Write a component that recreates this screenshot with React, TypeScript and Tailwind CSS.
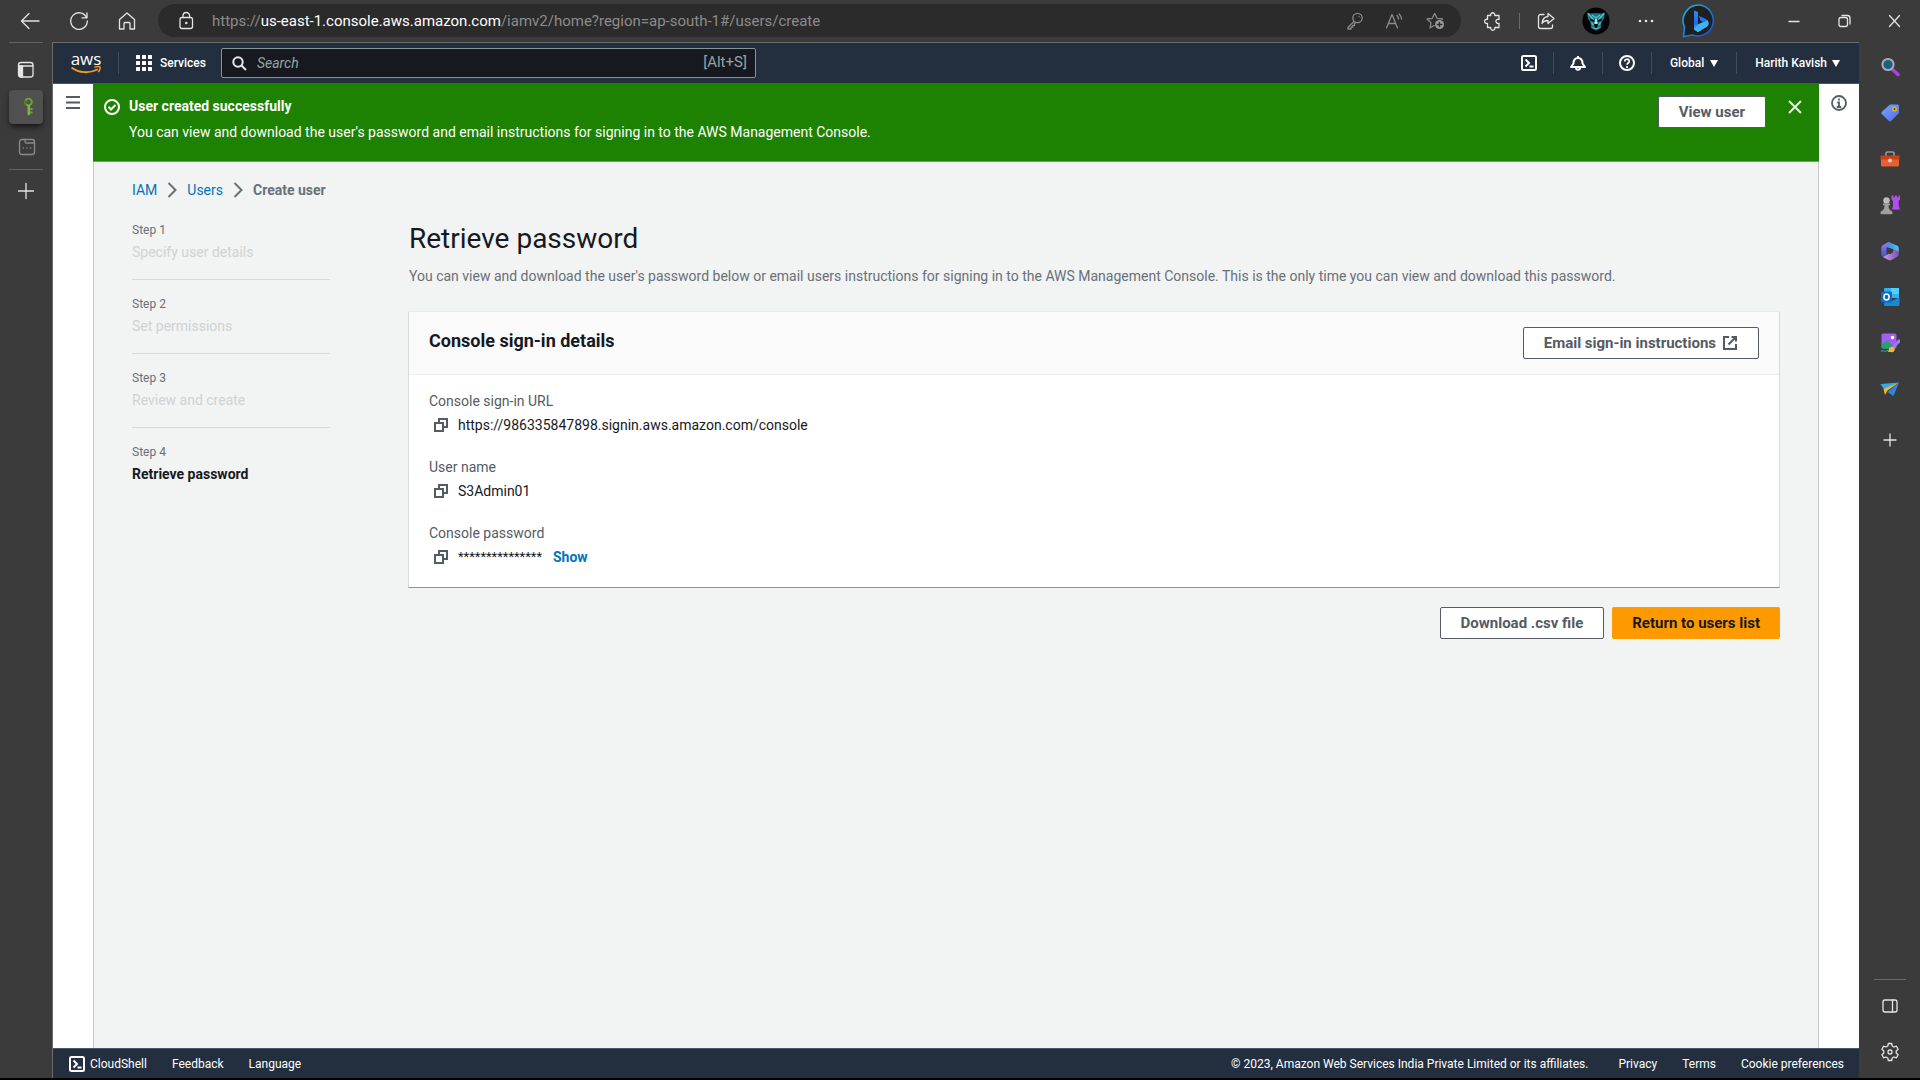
import React, { ReactNode } from "react";

type SvgProps = { className?: string; children: ReactNode; viewBox?: string };

function Line({ className = "size-5", children, viewBox = "0 0 20 20" }: SvgProps) {
  return (
    <svg
      className={className}
      viewBox={viewBox}
      fill="none"
      stroke="currentColor"
      strokeWidth="1.3"
      strokeLinecap="round"
      strokeLinejoin="round"
      aria-hidden="true"
    >
      {children}
    </svg>
  );
}

function Polaris({ className = "size-4", children, viewBox = "0 0 16 16" }: SvgProps) {
  return (
    <svg className={className} viewBox={viewBox} fill="none" stroke="currentColor" strokeWidth="2" aria-hidden="true">
      {children}
    </svg>
  );
}

function IconButton({ label, className = "", children }: { label: string; className?: string; children: ReactNode }) {
  return (
    <button type="button" aria-label={label} className={`flex shrink-0 items-center justify-center ${className}`}>
      {children}
    </button>
  );
}

/* ---------- Browser toolbar ---------- */

function Avatar() {
  return (
    <svg className="size-7" viewBox="0 0 28 28" aria-hidden="true">
      <circle cx="14" cy="14" r="13.6" fill="#020406" />
      <path d="M5 5.500 9 6.500 14 6 19 6.500 23 5.500 22 12 19.500 15.500 19 21 14 23.500 9 21 8.500 15.500 6 12Z" fill="#1d7480" />
      <path d="M6 6.500 11.500 12.500M22 6.500 16.500 12.500M10 8 14 11 18 8M9.500 15.500 11.500 18.500M18.500 15.500 16.500 18.500" stroke="#4fc9d4" strokeWidth="1.300" fill="none" />
      <path d="M8 12.500 12 14M20 12.500 16 14" stroke="#020406" strokeWidth="1.500" />
      <path d="M12 17h4l-1 3.500h-2Z" fill="#020406" />
      <path d="M14 12v3.500M12.500 16h3" stroke="#d6fbff" strokeWidth="1.600" />
      <path d="M10.500 20.500 14 22l3.500-1.500" stroke="#4fc9d4" fill="none" />
    </svg>
  );
}

function BingLogo() {
  return (
    <svg className="size-[34px]" viewBox="0 0 34 34" aria-hidden="true">
      <defs>
        <linearGradient id="bingRing" x1="0" y1="0" x2="1" y2="1">
          <stop offset="0" stopColor="#22b5e6" />
          <stop offset="1" stopColor="#1a45c8" />
        </linearGradient>
        <linearGradient id="bingB" x1="0" y1="0" x2="0" y2="1">
          <stop offset="0" stopColor="#2f8cf2" />
          <stop offset="0.600" stopColor="#1d6af0" />
          <stop offset="1" stopColor="#49c8f5" />
        </linearGradient>
      </defs>
      <path d="M17 1A15.500 15.500 0 1 1 10.500 31L1.500 32.500 2.500 23A15.500 15.500 0 0 1 17 1Z" fill="#1f1f20" stroke="url(#bingRing)" strokeWidth="1.600" />
      <path d="M12 6.500 16 8v12.500l5-2.700-2.600-1.300L17 12l7 3a4.500 4.500 0 0 1 1 7.500L16 28l-4-2.500Z" fill="url(#bingB)" />
      <path d="M16 20.500 25.500 16.500a4.500 4.500 0 0 1-.500 6L16 28l-4-2.500Z" fill="#3fb4f5" />
    </svg>
  );
}

function BrowserBar() {
  return (
    <header className="flex h-[42px] shrink-0 items-start bg-[#3b3b3b] pt-1 text-[#e4e4e4]">
      <div className="flex h-[33px] w-[158px] shrink-0 items-center pl-5">
        <IconButton label="Back" className="w-5">
          <Line>
            <path d="M19 10H2M9 2.500 1.500 10 9 17.500" />
          </Line>
        </IconButton>
        <IconButton label="Refresh" className="ml-[29px] w-5">
          <Line>
            <path d="M17.500 6.500A8.300 8.300 0 1 0 18.300 10M18 1.800v5h-5" />
          </Line>
        </IconButton>
        <IconButton label="Home" className="ml-7 w-5">
          <Line>
            <path d="M2.500 8.500 10 2l7.500 6.500V18H13v-5.500a1 1 0 0 0-1-1H8a1 1 0 0 0-1 1V18H2.500Z" />
          </Line>
        </IconButton>
      </div>

      <div className="flex h-[33px] min-w-0 flex-1 items-center rounded-full bg-[#2b2b2b] pr-4 pl-[18px] text-[#8b8b8b]">
        <IconButton label="Site information" className="w-5 text-[#e4e4e4]">
          <Line>
            <rect x="4" y="6.500" width="12.500" height="11" rx="2" />
            <path d="M7 6.500V4.800a3.300 3.300 0 0 1 6.600 0v1.700" />
            <circle cx="10.300" cy="12" r="0.600" fill="currentColor" />
          </Line>
        </IconButton>
        <button type="button" className="ml-4 min-w-0 flex-1 truncate text-left text-[15px] leading-6">
          https://<span className="text-white">us-east-1.console.aws.amazon.com</span>/iamv2/home?region=ap-south-1#/users/create
        </button>
        <div className="flex items-center gap-5">
          <IconButton label="Password manager" className="w-5">
            <Line>
              <circle cx="12.500" cy="7" r="4.700" />
              <path d="M9 10.500 3 16.500V18h3v-1.800h1.800v-1.800h1.700v-1.600l1-1M14 5.500v.100" />
            </Line>
          </IconButton>
          <IconButton label="Read aloud" className="w-5">
            <Line>
              <path d="M1.500 17 7 3.500 12.500 17M3.500 12.500h7M12 4.500a5 5 0 0 1 1.500 3.500M14.200 3a8 8 0 0 1 2.300 5" />
            </Line>
          </IconButton>
          <IconButton label="Add to favorites" className="w-5">
            <Line>
              <path d="M9 14.500 5 17l1-5.300L2 8l5.300-.700L9.700 2.500l2.400 4.800L17.500 8" />
              <circle cx="14.500" cy="13.500" r="4.500" fill="#9a9a9a" stroke="none" />
              <path d="M14.500 11.300v4.400M12.300 13.500h4.400" stroke="#2b2b2b" />
            </Line>
          </IconButton>
        </div>
      </div>

      <div className="flex h-[33px] shrink-0 items-center pl-[22px]">
        <IconButton label="Extensions" className="w-5">
          <Line>
            <path d="M4.500 4.500h3.200a2.100 2.100 0 1 1 4 0H16v4a2.100 2.100 0 1 0 0 3.700v4.300h-4.200a2.100 2.100 0 1 1-4 0H4.500v-4.200a2.100 2.100 0 1 1 0-3.900Z" />
          </Line>
        </IconButton>
        <span className="mx-4 h-4 w-px bg-[#6a6a6a]" />
        <IconButton label="Share" className="w-5">
          <Line>
            <path d="M8 3.500H4.500a2 2 0 0 0-2 2v10a2 2 0 0 0 2 2h10a2 2 0 0 0 2-2V14" />
            <path d="M12 2.500 18 7.500l-6 5V9.500c-3 0-5 1.200-6 3C6.300 8.500 8.500 5.800 12 5.500Z" />
          </Line>
        </IconButton>
        <IconButton label="Profile" className="ml-[26px] w-7">
          <Avatar />
        </IconButton>
        <IconButton label="Settings and more" className="ml-[26px] w-5">
          <svg className="size-5" viewBox="0 0 20 20" fill="currentColor" aria-hidden="true">
            <circle cx="4" cy="10" r="1.300" />
            <circle cx="10" cy="10" r="1.300" />
            <circle cx="16" cy="10" r="1.300" />
          </svg>
        </IconButton>
        <IconButton label="Bing" className="ml-[26px] w-[34px]">
          <BingLogo />
        </IconButton>
        <div className="ml-[68px] flex items-center gap-[30px] pr-4">
          <IconButton label="Minimize" className="w-5">
            <Line>
              <path d="M5 10.500h10" />
            </Line>
          </IconButton>
          <IconButton label="Restore" className="w-5">
            <Line>
              <rect x="5" y="6.500" width="8.500" height="9" rx="2" />
              <path d="M8 4.500h5.500a2.500 2.500 0 0 1 2.500 2.500v6" />
            </Line>
          </IconButton>
          <IconButton label="Close" className="w-5">
            <Line>
              <path d="M5.500 4.500l10 11M15.500 4.500l-10 11" />
            </Line>
          </IconButton>
        </div>
      </div>
    </header>
  );
}

/* ---------- Browser side rails ---------- */

function TabRail() {
  return (
    <nav aria-label="Tabs" className="flex w-[52px] shrink-0 flex-col items-center bg-[#3b3b3b] text-[#e4e4e4]">
      <span className="h-px w-[34px] bg-[#636363]" />
      <IconButton label="Tab actions" className="mt-4 size-5">
        <Line>
          <rect x="2.500" y="3.500" width="14.500" height="14.500" rx="2.500" />
          <path d="M2.500 7h14.500" />
          <path d="M3 7h3.500v11H5a2 2 0 0 1-2-2Z" fill="currentColor" />
        </Line>
      </IconButton>
      <IconButton label="IAM tab" className="mt-[11px] size-[34px] rounded bg-[#505050] shadow-md shadow-black/50">
        <svg className="size-5" viewBox="0 0 20 20" aria-hidden="true">
          <circle cx="12.500" cy="5" r="3.300" fill="none" stroke="#6f9c37" strokeWidth="2" />
          <path d="M8 3.500 10 5 8.500 8" fill="none" stroke="#4f7426" strokeWidth="1.500" />
          <path d="M11.500 8H14v9.500l-1.300 1-1.200-1Z" fill="#7eb23e" />
          <path d="M14 11h2.500v2H14zM14 14.500h2.500v2H14z" fill="#6f9c37" />
        </svg>
      </IconButton>
      <IconButton label="Sleeping tab" className="mt-[13px] size-5 text-[#8a8a8a]">
        <Line>
          <rect x="3.500" y="2.500" width="15" height="15" rx="2.500" />
          <path d="M9 2.500v2A1.500 1.500 0 0 0 10.500 6h8M7.300 11h.200M10.900 11h.200M14.500 11h.200" />
        </Line>
      </IconButton>
      <span className="mt-3 h-px w-[34px] bg-[#636363]" />
      <IconButton label="New tab" className="mt-[11px] size-5">
        <Line>
          <path d="M2.500 10h15M10 2.500v15" />
        </Line>
      </IconButton>
    </nav>
  );
}

const apps: { name: string; art: ReactNode }[] = [
  {
    name: "Search",
    art: (
      <>
        <path d="m12.500 12.500 5.500 5" stroke="#b43be8" strokeWidth="3.500" strokeLinecap="round" />
        <circle cx="8" cy="7.500" r="5.600" fill="#1b5f83" stroke="#a9adb0" strokeWidth="2" />
      </>
    ),
  },
  {
    name: "Shopping",
    art: (
      <>
        <path d="M10 1.500h7.500a1.500 1.500 0 0 1 1.500 1.500v7l-8 8a1.500 1.500 0 0 1-2 0L1.700 11a1.500 1.500 0 0 1 0-2Z" fill="url(#tagFill)" />
        <circle cx="14.500" cy="6" r="1.700" fill="#3a3a3a" stroke="#e8b90c" strokeWidth="1.600" />
      </>
    ),
  },
  {
    name: "Tools",
    art: (
      <>
        <path d="M6 7V4.500A1.500 1.500 0 0 1 7.500 3h5A1.500 1.500 0 0 1 14 4.500V7" fill="none" stroke="#9a9a9a" strokeWidth="1.600" />
        <path d="M1 10h18v6.500a1 1 0 0 1-1 1H2a1 1 0 0 1-1-1Z" fill="#e8602f" />
        <path d="M.500 6.500h19v4H.500Z" fill="#c6401a" />
        <circle cx="10" cy="11.500" r="2" fill="#d2d2d2" />
      </>
    ),
  },
  {
    name: "Games",
    art: (
      <>
        <path d="M11.500.500h2v1.700H15V.500h2v1.700h1.500V.500h1.500v4L18.700 6v5l1.300 3.500h-8L13 11V6l-1.500-1.500Z" fill="#b44cf2" />
        <circle cx="6.500" cy="5.500" r="3.200" fill="#bdbdbd" />
        <path d="M3 8.500h7v1.800H8.500c0 2 .500 3.500 1.500 5 1.700.500 2.500 1.400 2.500 2.700 0 .800-.400 1.200-1.200 1.200H1.700c-.800 0-1.200-.400-1.200-1.200 0-1.300.800-2.200 2.500-2.700 1-1.500 1.500-3 1.500-5H3Z" fill="#a0a0a0" />
      </>
    ),
  },
  {
    name: "Microsoft 365",
    art: (
      <>
        <path d="M9 .800 3 4a3 3 0 0 0-1.700 2.700v6.500A3 3 0 0 0 3 16l3.500-2V6.500L12 3.500Z" fill="url(#m365a)" />
        <path d="M8.500 1 17 4.500a3 3 0 0 1 1.700 2.700v4.300L13 8.500 6.500 6Z" fill="url(#m365b)" />
        <path d="M18.700 10.500v2.700A3 3 0 0 1 17 16l-5.500 3a3 3 0 0 1-3 0L3 16l3.500-2 7-4v-2Z" fill="url(#m365c)" />
        <path d="M10 7 13 8.500v3L10 13.300 7.200 11.700V8.500Z" fill="#3b3b3b" />
      </>
    ),
  },
  {
    name: "Outlook",
    art: (
      <>
        <path d="M5 1h13a1 1 0 0 1 1 1v9H4V2a1 1 0 0 1 1-1Z" fill="#35b2ee" />
        <path d="M11 1h8v6h-8Z" fill="#50d0fa" />
        <path d="M4 10l8 4 7.500-4v8a1 1 0 0 1-1 1H5a1 1 0 0 1-1-1Z" fill="#1689d8" />
        <rect x="1" y="4.500" width="11" height="11" rx="1" fill="#0a6cc4" />
        <ellipse cx="6.500" cy="10" rx="2.600" ry="2.900" fill="none" stroke="#fff" strokeWidth="1.500" />
      </>
    ),
  },
  {
    name: "Image Creator",
    art: (
      <>
        <rect x="1.500" y=".500" width="15" height="15" rx="1.500" fill="#a35df0" />
        <circle cx="12.500" cy="4.500" r="1.700" fill="#fff" />
        <path d="M1.500 12 7 7.500l7 6-1 2H3a1.500 1.500 0 0 1-1.500-1.500Z" fill="#21a36d" />
        <path d="M1 18.500c2-2.500 3 1 5-.500s3 .500 4 0" fill="none" stroke="#1fa26c" strokeWidth="1.300" />
        <path d="m19 8-6.500 7" stroke="#9b7bf5" strokeWidth="3.200" strokeLinecap="round" />
        <path d="M13 14a2.500 2.500 0 0 1-2 5H8c1-1 .500-3 1.500-4.500Z" fill="#f6b62f" />
      </>
    ),
  },
  {
    name: "Drop",
    art: (
      <>
        <path d="M.500 5 19 3.500 4.500 11Z" fill="#37a8ec" />
        <path d="M19 3.500 13.500 17 7.500 13Z" fill="#2e86e0" />
        <path d="M19 3.500 3.500 10 5 16l2.500-4.500Z" fill="#f3bb23" />
      </>
    ),
  },
];

function AppRail() {
  return (
    <nav aria-label="Sidebar" className="flex w-[61px] shrink-0 flex-col items-center bg-[#3b3b3b] pt-[15px] pb-4 text-[#e4e4e4]">
      <svg className="absolute size-0" aria-hidden="true">
        <defs>
          <linearGradient id="tagFill" x1="0" y1="0" x2="1" y2="1">
            <stop offset="0" stopColor="#70aaff" />
            <stop offset="1" stopColor="#5b64ee" />
          </linearGradient>
          <linearGradient id="m365a" x1="0" y1="0" x2="0" y2="1">
            <stop offset="0" stopColor="#9a7ff0" />
            <stop offset="1" stopColor="#4055c0" />
          </linearGradient>
          <linearGradient id="m365b" x1="0" y1="0" x2="1" y2="0">
            <stop offset="0" stopColor="#4c7fe0" />
            <stop offset="1" stopColor="#4fc3f0" />
          </linearGradient>
          <linearGradient id="m365c" x1="0" y1="0" x2="1" y2="0">
            <stop offset="0" stopColor="#d69be8" />
            <stop offset="1" stopColor="#7a52b8" />
          </linearGradient>
        </defs>
      </svg>
      <div className="flex flex-col items-center gap-[26px]">
        {apps.map((app) => (
          <IconButton key={app.name} label={app.name} className="size-5">
            <svg className="size-5" viewBox="0 0 20 20" fill="none" aria-hidden="true">
              {app.art}
            </svg>
          </IconButton>
        ))}
      </div>
      <IconButton label="Customize sidebar" className="mt-[31px] size-5">
        <Line>
          <path d="M4 10h12M10 4v12" />
        </Line>
      </IconButton>
      <span className="mt-auto h-px w-8 bg-[#6a6a6a]" />
      <IconButton label="Hide sidebar" className="mt-4 size-5">
        <Line>
          <rect x="3" y="4" width="14" height="12" rx="2" />
          <path d="M12.500 4v12" />
        </Line>
      </IconButton>
      <IconButton label="Sidebar settings" className="mt-[26px] size-5">
        <Line>
          <path d="M8.300 1.500h3.400l.500 2.500 1.800 1 2.400-.800 1.700 3-1.900 1.700v2.200l1.900 1.700-1.700 3-2.400-.800-1.800 1-.500 2.500H8.300L7.800 16 6 15l-2.400.800-1.700-3 1.900-1.700V8.900L1.900 7.200l1.700-3L6 5l1.800-1Z" />
          <circle cx="10" cy="10" r="2" />
        </Line>
      </IconButton>
    </nav>
  );
}

/* ---------- Console header and footer ---------- */

function TerminalIcon() {
  return (
    <Polaris>
      <rect x="1" y="1" width="14" height="14" rx="1.500" />
      <path d="m4.500 4.500 3.500 3.500-3.500 3.500M8.500 11.500h4" />
    </Polaris>
  );
}

function Caret() {
  return (
    <svg className="h-[7px] w-2" viewBox="0 0 8 7" fill="currentColor" aria-hidden="true">
      <path d="M0 0h8L4 7Z" />
    </svg>
  );
}

function ConsoleHeader() {
  return (
    <header className="flex h-[41px] shrink-0 items-center border-b border-[#4a5866] bg-[#232f3e] text-xs text-white">
      <a href="#home" aria-label="AWS home" className="ml-[17px] flex w-8 flex-col items-center">
        <span className="font-['Open_Sans',sans-serif] text-[17px] leading-[14px] font-medium">aws</span>
        <svg className="h-2 w-8" viewBox="0 0 32 8" fill="none" stroke="#f79a1d" aria-hidden="true">
          <path d="M1.500 1.500C9 7.500 20 7.500 28 3.200" strokeWidth="1.800" />
          <path d="M24.500 1.300c2-.800 5-1 5.500-.300s-.300 3.500-1.700 5" strokeWidth="1.400" />
        </svg>
      </a>
      <span className="ml-4 h-[22px] w-px bg-[#414d5c]" />
      <button type="button" className="ml-[17px] flex items-center gap-2 font-medium">
        <svg className="size-4" viewBox="0 0 16 16" fill="currentColor" aria-hidden="true">
          {[0, 6, 12].map((y) => [0, 6, 12].map((x) => <rect key={`${x}-${y}`} x={x} y={y} width="4" height="4" rx="0.500" />))}
        </svg>
        Services
      </button>
      <div className="ml-[15px] flex h-[30px] w-[535px] items-center rounded-xs border border-[#879596] bg-[#16191f] pr-2 pl-[10px] text-sm text-[#95a5a6]">
        <svg className="size-[15px]" viewBox="0 0 15 15" fill="none" stroke="#e6eaea" strokeWidth="2" aria-hidden="true">
          <circle cx="6" cy="6" r="4.700" />
          <path d="m9.500 9.500 4.500 4.500" />
        </svg>
        <input
          type="search"
          aria-label="Search"
          placeholder="Search"
          className="ml-[10px] min-w-0 flex-1 bg-transparent text-sm italic outline-none placeholder:text-[#95a5a6]"
        />
        <span className="text-[15px]">[Alt+S]</span>
      </div>
      <div className="ml-auto flex items-center pr-[19px]">
        <IconButton label="CloudShell" className="w-4">
          <TerminalIcon />
        </IconButton>
        <span className="mx-4 h-[22px] w-px bg-[#414d5c]" />
        <IconButton label="Notifications" className="w-4">
          <Polaris>
            <path d="M8 1v2M3.500 8.500C3.500 5 5.500 3 8 3s4.500 2 4.500 5.500L15 12H1Z" strokeLinejoin="round" />
            <path d="M6 12.500c0 3 4 3 4 0" />
          </Polaris>
        </IconButton>
        <span className="mx-4 h-[22px] w-px bg-[#414d5c]" />
        <IconButton label="Support" className="w-4">
          <Polaris>
            <circle cx="8" cy="8" r="7" />
            <path d="M5.700 6.500C5.700 3.500 10.300 3.500 10.300 6.300 10.300 8 8 8 8 9.800M8 11v2" strokeWidth="1.700" />
          </Polaris>
        </IconButton>
        <span className="ml-4 h-[22px] w-px bg-[#414d5c]" />
        <button type="button" className="mx-[18px] flex items-center gap-[6px] font-medium">
          Global
          <Caret />
        </button>
        <span className="h-[22px] w-px bg-[#414d5c]" />
        <button type="button" className="ml-[18px] flex items-center gap-[5px] font-medium">
          Harith Kavish
          <Caret />
        </button>
      </div>
    </header>
  );
}

function ConsoleFooter() {
  return (
    <footer className="flex h-[30px] shrink-0 items-center border-t border-[#4a5866] bg-[#232f3e] pr-[15px] pl-4 text-xs text-white">
      <button type="button" className="flex items-center gap-[5px]">
        <TerminalIcon />
        CloudShell
      </button>
      <a href="#feedback" className="ml-[25px]">Feedback</a>
      <button type="button" className="ml-[25px]">Language</button>
      <span className="ml-auto">© 2023, Amazon Web Services India Private Limited or its affiliates.</span>
      <a href="#privacy" className="ml-[30px]">Privacy</a>
      <a href="#terms" className="ml-[25px]">Terms</a>
      <a href="#cookies" className="ml-[25px]">Cookie preferences</a>
    </footer>
  );
}

/* ---------- Console page ---------- */

const outlineButton =
  "flex h-8 items-center rounded-xs border border-[#545b64] bg-white px-5 pb-px text-[15px] leading-5 font-bold text-[#545b64]";

function Flash() {
  return (
    <div role="status" className="flex h-[78px] shrink-0 items-start border-b border-[#7d9a72] bg-[#1d8102] pr-4 pl-[11px] text-sm text-white">
      <Polaris className="mt-[15px] size-4 shrink-0">
        <circle cx="8" cy="8" r="7" />
        <path d="m4.500 7.800 2.500 2.700 4.500-4.500" />
      </Polaris>
      <div className="ml-[9px] flex-1 pt-3 leading-5">
        <p className="font-bold">User created successfully</p>
        <p className="mt-[6px]">You can view and download the user&apos;s password and email instructions for signing in to the AWS Management Console.</p>
      </div>
      <button type="button" className={`mt-3 ${outlineButton}`}>
        View user
      </button>
      <IconButton label="Dismiss" className="mt-[15px] ml-[21px] w-4 text-[#e9f2e6]">
        <Polaris>
          <path d="m2 2 12 12M14 2 2 14" />
        </Polaris>
      </IconButton>
    </div>
  );
}

function Separator() {
  return (
    <svg className="mx-[7px] h-4 w-4" viewBox="0 0 16 16" fill="none" stroke="#687078" strokeWidth="2" aria-hidden="true">
      <path d="m4.500 1 7 7-7 7" />
    </svg>
  );
}

const steps = ["Specify user details", "Set permissions", "Review and create", "Retrieve password"];

function Steps() {
  return (
    <ol className="pt-px">
      {steps.map((title, i) => {
        const current = i === steps.length - 1;
        return (
          <li key={title} className={current ? "" : "mb-4 border-b border-[#d5dbdb] pb-[17px]"}>
            <p className="text-xs text-[#687078]">Step {i + 1}</p>
            <p className={current ? "mt-1 text-sm font-bold text-[#16191f]" : "mt-1 text-sm text-[#d0d2d3]"} aria-current={current ? "step" : undefined}>
              {title}
            </p>
          </li>
        );
      })}
    </ol>
  );
}

function Field({ label, children }: { label: string; children: ReactNode }) {
  return (
    <div>
      <dt className="text-[#545b64]">{label}</dt>
      <dd className="mt-1 flex items-center text-[#16191f]">
        <IconButton label={`Copy ${label}`} className="mr-[9px] ml-1 w-4 text-[#545b64]">
          <Polaris>
            <path d="M2 6h8v8H2Z" />
            <path d="M6 6V2h8v8h-4" />
          </Polaris>
        </IconButton>
        {children}
      </dd>
    </div>
  );
}

function SignInCard() {
  return (
    <section aria-labelledby="details" className="mt-[25px] border border-t-[#eaeded] border-r-[#d5dbdb] border-b-[#879596] border-l-[#d5dbdb] bg-white">
      <div className="flex h-[63px] items-start justify-between border-b border-[#eaeded] bg-[#fafafa] px-5 pt-[15px]">
        <h2 id="details" className="text-lg leading-7 font-bold text-[#16191f]">
          Console sign-in details
        </h2>
        <button type="button" className={`gap-[6px] ${outlineButton}`}>
          Email sign-in instructions
          <Polaris>
            <path d="M7 2H2v12h12V9M9.500 2H14v4.500M14 2 6.500 9.500" />
          </Polaris>
        </button>
      </div>
      <dl className="flex flex-col gap-[22px] px-5 pt-4 pb-5 text-sm">
        <Field label="Console sign-in URL">https://986335847898.signin.aws.amazon.com/console</Field>
        <Field label="User name">S3Admin01</Field>
        <Field label="Console password">
          <span className="text-[13px]">***************</span>
          <button type="button" className="ml-[11px] font-bold text-[#0073bb]">
            Show
          </button>
        </Field>
      </dl>
    </section>
  );
}

function Page() {
  return (
    <main className="flex min-w-0 flex-1 flex-col overflow-hidden bg-[#f2f3f3]">
      <Flash />
      <div className="flex-1 border-x border-[#c4cbcb] px-[38px] pt-[18px]">
        <nav aria-label="Breadcrumb" className="flex items-center text-sm">
          <a href="#iam" className="text-[#0073bb]">IAM</a>
          <Separator />
          <a href="#users" className="text-[#0073bb]">Users</a>
          <Separator />
          <span className="font-bold text-[#687078]">Create user</span>
        </nav>
        <div className="mt-[21px] grid grid-cols-[198px_1fr] gap-[78px]">
          <Steps />
          <div>
            <h1 className="pl-px text-[28px] leading-9 text-[#16191f]">Retrieve password</h1>
            <p className="mt-[9px] pl-px text-sm text-[#687078]">
              You can view and download the user&apos;s password below or email users instructions for signing in to the AWS Management Console. This is the only time you can view and download this password.
            </p>
            <SignInCard />
            <div className="mt-[19px] flex justify-end gap-2">
              <button type="button" className={outlineButton}>
                Download .csv file
              </button>
              <button type="button" className="flex h-8 items-center rounded-xs bg-[#ff9900] px-5 pb-px text-[15px] leading-5 font-bold text-[#16191f]">
                Return to users list
              </button>
            </div>
          </div>
        </div>
      </div>
    </main>
  );
}

export default function App() {
  return (
    <div className="flex h-screen flex-col border-b-2 border-black bg-[#3b3b3b] font-[Roboto,sans-serif]">
      <BrowserBar />
      <div className="flex min-h-0 flex-1">
        <TabRail />
        <div className="flex min-w-0 flex-1 flex-col border-t border-l border-[#6b6b6b]">
          <ConsoleHeader />
          <div className="flex min-h-0 flex-1 bg-white text-[#545b64]">
            <div className="w-10 shrink-0 pt-[11px]">
              <IconButton label="Open navigation" className="mx-auto w-4">
                <Polaris>
                  <path d="M1 2h14M1 7.500h14M1 13h14" />
                </Polaris>
              </IconButton>
            </div>
            <Page />
            <div className="w-10 shrink-0 pt-[11px]">
              <IconButton label="Open help panel" className="mx-auto w-4">
                <Polaris>
                  <circle cx="8" cy="8" r="7" strokeWidth="1.800" />
                  <path d="M8 3.500v2M6.300 7.500H8V12M5.800 12h4.400" strokeWidth="1.800" />
                </Polaris>
              </IconButton>
            </div>
          </div>
          <ConsoleFooter />
        </div>
        <AppRail />
      </div>
    </div>
  );
}
